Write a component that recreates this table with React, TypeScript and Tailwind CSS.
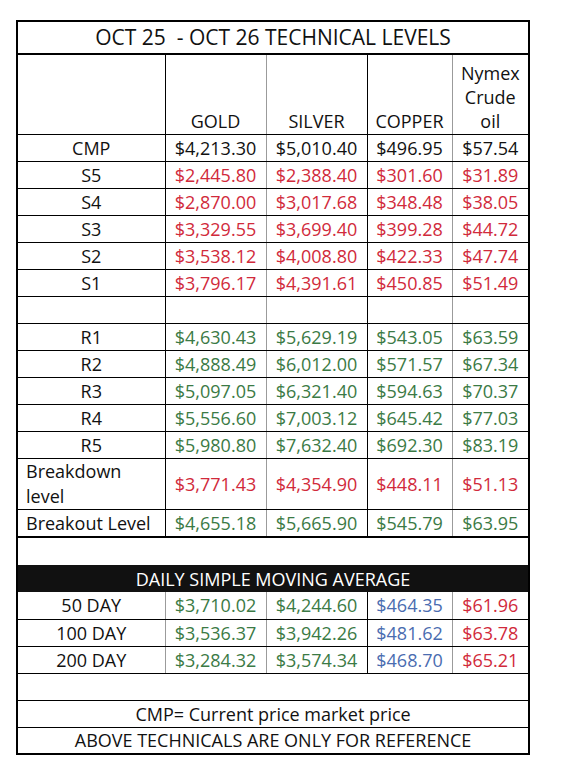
import React from "react";

const RED = "text-[#d12a3b]";
const GREEN = "text-[#3b7a45]";
const BLUE = "text-[#4a6cb0]";
const BLACK = "text-[#111]";

type Row = { label: string; vals: string[]; color: string; h?: string; left?: boolean; colors?: string[] };

const top: Row[] = [
  { label: "CMP", vals: ["$4,213.30", "$5,010.40", "$496.95", "$57.54"], color: BLACK },
  { label: "S5", vals: ["$2,445.80", "$2,388.40", "$301.60", "$31.89"], color: RED },
  { label: "S4", vals: ["$2,870.00", "$3,017.68", "$348.48", "$38.05"], color: RED },
  { label: "S3", vals: ["$3,329.55", "$3,699.40", "$399.28", "$44.72"], color: RED },
  { label: "S2", vals: ["$3,538.12", "$4,008.80", "$422.33", "$47.74"], color: RED },
  { label: "S1", vals: ["$3,796.17", "$4,391.61", "$450.85", "$51.49"], color: RED },
  { label: "", vals: ["", "", "", ""], color: BLACK },
  { label: "R1", vals: ["$4,630.43", "$5,629.19", "$543.05", "$63.59"], color: GREEN },
  { label: "R2", vals: ["$4,888.49", "$6,012.00", "$571.57", "$67.34"], color: GREEN },
  { label: "R3", vals: ["$5,097.05", "$6,321.40", "$594.63", "$70.37"], color: GREEN },
  { label: "R4", vals: ["$5,556.60", "$7,003.12", "$645.42", "$77.03"], color: GREEN },
  { label: "R5", vals: ["$5,980.80", "$7,632.40", "$692.30", "$83.19"], color: GREEN },
];

const sma: Row[] = [
  { label: "50 DAY", vals: ["$3,710.02", "$4,244.60", "$464.35", "$61.96"], color: GREEN },
  { label: "100 DAY", vals: ["$3,536.37", "$3,942.26", "$481.62", "$63.78"], color: GREEN },
  { label: "200 DAY", vals: ["$3,284.32", "$3,574.34", "$468.70", "$65.21"], color: GREEN },
];

const smaColors = [GREEN, GREEN, BLUE, RED];

// right-border classes per column (data section)
const rb = [
  "border-r border-r-black",
  "border-r border-r-[#9b9b9b]",
  "border-r border-r-black",
  "border-r border-r-[#9b9b9b]",
  "",
];
const rbSma = [
  "border-r border-r-[#9b9b9b]",
  "border-r border-r-[#9b9b9b]",
  "border-r border-r-black",
  "border-r border-r-[#9b9b9b]",
  "",
];

export default function App() {
  return (
    <div
      className="min-h-[765px] w-[565px] bg-white pl-[16px] pt-[20px]"
      style={{ fontFamily: '"Open Sans", "Noto Sans", sans-serif' }}
    >
      <table className="w-[512px] table-fixed border-collapse border-2 border-black text-[18px] text-[#111]">
        <colgroup>
          <col className="w-[148px]" />
          <col className="w-[101px]" />
          <col className="w-[101px]" />
          <col className="w-[85px]" />
          <col className="w-[77px]" />
        </colgroup>
        <tbody>
          <tr className="h-[33px]">
            <td colSpan={5} className="border-b-2 border-b-black p-0 text-center text-[21px] leading-none">
              OCT 25&nbsp; - OCT 26 TECHNICAL LEVELS
            </td>
          </tr>
          <tr className="h-[80px]">
            {["", "GOLD", "SILVER", "COPPER"].map((t, i) => (
              <td key={i} className={`${rb[i]} border-b border-b-black p-0 pb-[1px] text-center align-bottom leading-[24px]`}>
                {t}
              </td>
            ))}
            <td className="border-b border-b-black p-0 pb-[1px] text-center align-bottom leading-[24px]">
              Nymex
              <br />
              Crude
              <br />
              oil
            </td>
          </tr>
          {top.map((r, ri) => (
            <tr key={ri} className="h-[27px]">
              <td className={`${rb[0]} border-b border-b-black p-0 text-center leading-none`}>{r.label}</td>
              {r.vals.map((v, i) => (
                <td key={i} className={`${rb[i + 1]} border-b border-b-black p-0 text-center leading-none ${r.color}`}>
                  {v}
                </td>
              ))}
            </tr>
          ))}
          <tr className="h-[50px]">
            <td className={`${rb[0]} border-b border-b-black p-0 pl-[8px] text-left leading-[25px]`}>
              Breakdown
              <br />
              level
            </td>
            {["$3,771.43", "$4,354.90", "$448.11", "$51.13"].map((v, i) => (
              <td key={i} className={`${rb[i + 1]} border-b border-b-black p-0 text-center leading-none ${RED}`}>
                {v}
              </td>
            ))}
          </tr>
          <tr className="h-[28px]">
            <td className={`${rb[0]} border-b-2 border-b-black p-0 pl-[8px] text-left leading-none`}>Breakout Level</td>
            {["$4,655.18", "$5,665.90", "$545.79", "$63.95"].map((v, i) => (
              <td key={i} className={`${rb[i + 1]} border-b-2 border-b-black p-0 text-center leading-none ${GREEN}`}>
                {v}
              </td>
            ))}
          </tr>
          <tr className="h-[28px]">
            <td colSpan={5} className="p-0" />
          </tr>
          <tr className="h-[27px]">
            <td colSpan={5} className="bg-[#111] p-0 text-center leading-none text-white">
              DAILY SIMPLE MOVING AVERAGE
            </td>
          </tr>
          {sma.map((r, ri) => (
            <tr key={ri} className="h-[27px]">
              <td className={`${rbSma[0]} border-b border-b-black p-0 text-center leading-none`}>{r.label}</td>
              {r.vals.map((v, i) => (
                <td key={i} className={`${rbSma[i + 1]} border-b border-b-black p-0 text-center leading-none ${smaColors[i]}`}>
                  {v}
                </td>
              ))}
            </tr>
          ))}
          <tr className="h-[27px]">
            <td colSpan={5} className="border-b border-b-black p-0" />
          </tr>
          <tr className="h-[27px]">
            <td colSpan={5} className="border-b border-b-black p-0 text-center leading-none">
              CMP= Current price market price
            </td>
          </tr>
          <tr className="h-[27px]">
            <td colSpan={5} className="p-0 text-center leading-none">
              ABOVE TECHNICALS ARE ONLY FOR REFERENCE
            </td>
          </tr>
        </tbody>
      </table>
    </div>
  );
}
